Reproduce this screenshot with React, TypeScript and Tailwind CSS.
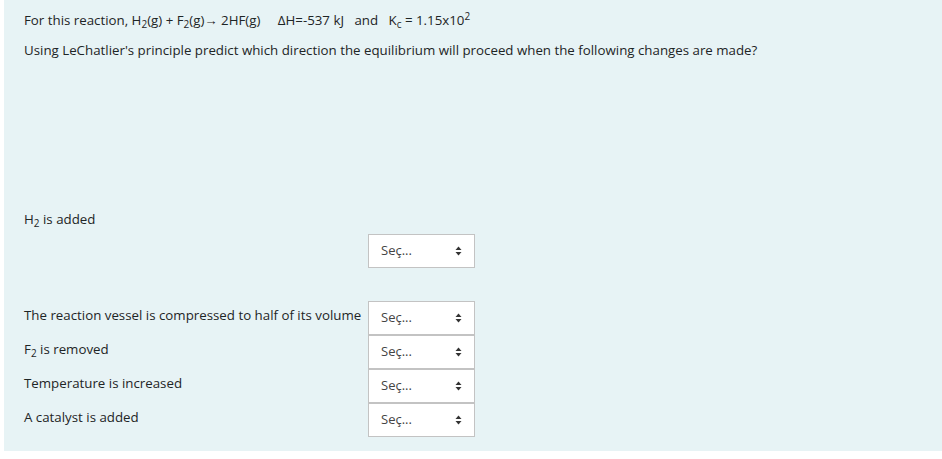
import React from "react";

function Arrows() {
  return (
    <svg width="7" height="10" viewBox="0 0 7 10" className="block">
      <path d="M3.5 0.5 L6.5 4 L0.5 4 Z" fill="#333" />
      <path d="M0.5 6 L6.5 6 L3.5 9.5 Z" fill="#333" />
    </svg>
  );
}

function Select({ className = "" }: { className?: string }) {
  return (
    <div
      className={
        "w-[107px] h-[34px] border border-[#c3c3c3] bg-white flex items-center justify-between pl-[12px] pr-[12px] text-[13px] text-[#444] " +
        className
      }
    >
      <span>Seç...</span>
      <Arrows />
    </div>
  );
}

export default function App() {
  const nb = "\u00a0";
  return (
    <div
      className="w-[942px] h-[459px] bg-white text-[#1e2526]"
      style={{ fontFamily: '"Open Sans", "Noto Sans", Arial, sans-serif' }}
    >
      <div className="ml-[4px] w-[938px] h-[451px] bg-[#e7f3f5] pl-[20px] pt-[10px] text-[13.3px]">
        <div className="h-[20px] leading-[20px] whitespace-nowrap">
          For this reaction, H<sub className="text-[10px]">2</sub>(g) + F
          <sub className="text-[10px]">2</sub>(g)→ 2HF(g){nb}{nb}{nb}{nb}{nb}ΔH=-537{nb}kJ{nb}{nb}{nb}and{nb}{nb}{nb}K
          <sub className="text-[10px]">c</sub> = 1.15x10<sup className="text-[10px]">2</sup>
        </div>
        <div className="h-[20px] leading-[20px] mt-[10px] whitespace-nowrap">
          Using LeChatlier's principle predict which direction the equilibrium will proceed when the following changes are made?
        </div>
        <div className="mt-[149px] h-[20px] leading-[20px]">
          H<sub className="text-[10px]">2</sub> is added
        </div>
        <div className="pl-[344px] mt-[5px]">
          <Select />
        </div>
        <div className="mt-[33px] flex flex-col">
          {[
            <>The reaction vessel is compressed to half of its volume</>,
            <>
              F<sub className="text-[10px]">2</sub> is removed
            </>,
            <>Temperature is increased</>,
            <>A catalyst is added</>,
          ].map((label, i) => (
            <div key={i} className="flex h-[34px]">
              <div className="w-[344px] h-[28px] leading-[28px] whitespace-nowrap">{label}</div>
              <Select />
            </div>
          ))}
        </div>
      </div>
    </div>
  );
}
